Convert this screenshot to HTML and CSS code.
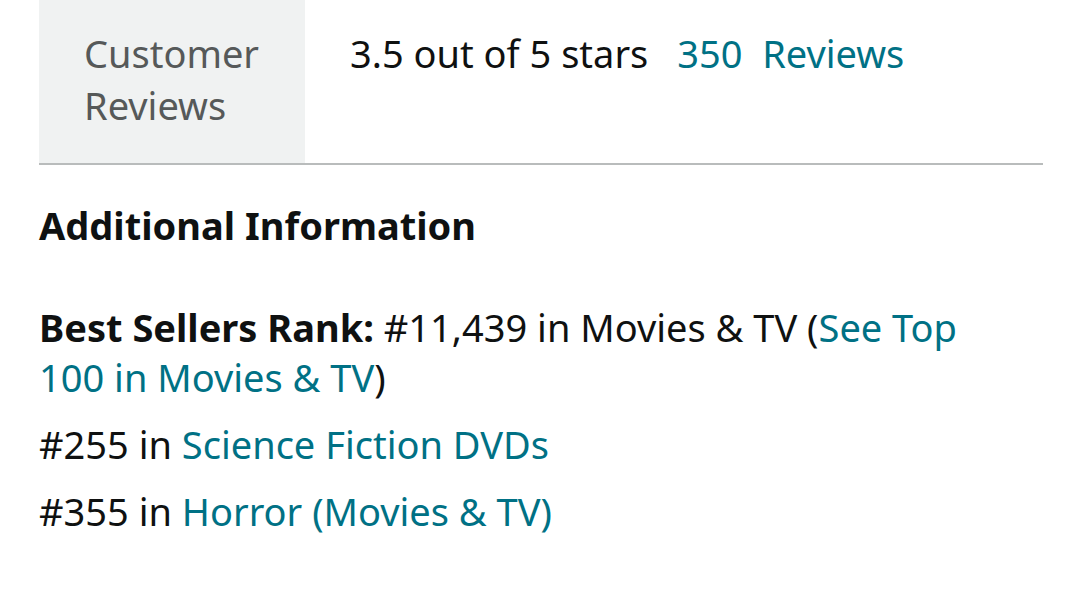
FILE: index.html
```html
<!DOCTYPE html>
<html lang="en">
<head>
<meta charset="utf-8">
<title>Product details</title>
<link rel="stylesheet" href="styles.css">
</head>
<body>
<main class="page">
  <div class="attr-row">
    <div class="attr-label">Customer<br>Reviews</div>
    <div class="attr-value">3.5 out of 5 stars <a class="link gap" href="#">350 &nbsp;Reviews</a></div>
  </div>
  <section class="info">
    <h2 class="info-title">Additional Information</h2>
    <ul class="rank-list">
      <li><b>Best Sellers Rank:</b> #11,439 in Movies &amp; TV (<a class="link" href="#">See Top 100 in Movies &amp; TV</a>)</li>
      <li>#255 in <a class="link" href="#">Science Fiction DVDs</a></li>
      <li>#355 in <a class="link" href="#">Horror (Movies &amp; TV)</a></li>
    </ul>
  </section>
</main>
</body>
</html>
```
FILE: styles.css
```css
html, body {
  margin: 0;
  padding: 0;
  background: #ffffff;
}
body {
  font-family: "Noto Sans", "Open Sans", sans-serif;
  font-size: 38px;
  color: #0f1111;
}
.page {
  padding-left: 39px;
  width: 1004px;
}
.attr-row {
  display: flex;
  border-bottom: 2px solid #b9bcbc;
}
.attr-label {
  width: 221px;
  flex: none;
  background: #f0f2f2;
  color: #565959;
  padding: 27px 0 32px 45px;
  line-height: 52px;
}
.attr-value {
  padding: 27px 0 0 45px;
  line-height: 52px;
}
.link {
  color: #007185;
  text-decoration: none;
}
.gap {
  margin-left: 19px;
}
.info {
  padding-right: 40px;
}
.info-title {
  margin: 34px 0 0 0;
  font-size: 38px;
  line-height: 52px;
  font-weight: 700;
}
.rank-list {
  list-style: none;
  margin: 51px 0 0 0;
  padding: 0;
  line-height: 50px;
}
.rank-list li {
  margin-bottom: 17px;
}
.rank-list b {
  font-weight: 700;
}
```
